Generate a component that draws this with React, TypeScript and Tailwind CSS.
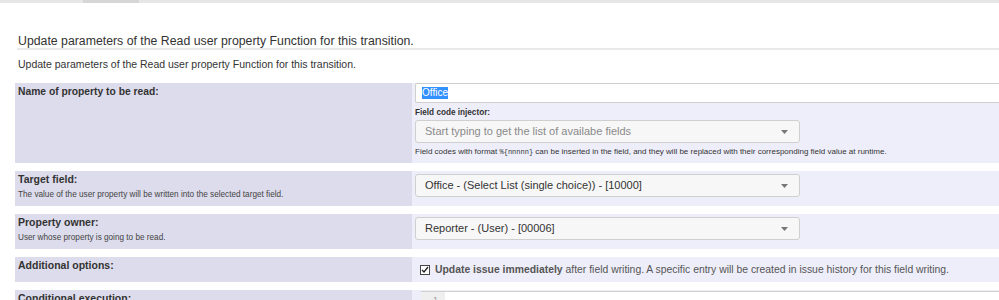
import React from "react";

const font = { fontFamily: '"Liberation Sans", Arial, sans-serif' };

function Caret() {
  return (
    <svg width="7" height="4" viewBox="0 0 7 4" className="shrink-0">
      <path d="M0 0h7L3.5 4z" fill="#777" />
    </svg>
  );
}

function Select({ text, placeholder }: { text: string; placeholder?: boolean }) {
  return (
    <div className="flex h-[23px] w-[385px] items-center justify-between rounded-[3px] border border-[#cfcfcf] bg-[#f7f7f7] pl-[9px] pr-[11px]">
      <span className={`text-[11px] ${placeholder ? "text-[#8a8a8a]" : "text-[#333]"}`}>{text}</span>
      <Caret />
    </div>
  );
}

function Row({
  label,
  help,
  labelSize = "text-[10.5px]",
  className = "",
  children,
}: {
  label: string;
  help?: string;
  labelSize?: string;
  className?: string;
  children?: React.ReactNode;
}) {
  return (
    <div className={`flex ${className}`}>
      <div className="w-[397px] shrink-0 bg-[#dddcec] pl-[3px] pt-[2px]">
        <div className={`${labelSize} font-bold leading-[13px] text-[#333]`}>{label}</div>
        {help ? <div className="mt-[4px] text-[8.2px] leading-[10px] text-[#444]">{help}</div> : null}
      </div>
      <div className="flex-1 bg-[#eeeefa] pl-[3px]">{children}</div>
    </div>
  );
}

export default function App() {
  return (
    <div className="h-[300px] w-[999px] overflow-hidden bg-white" style={font}>
      <div className="flex h-[3px] bg-[#e6e6e6]">
        <div className="ml-[83px] w-[56px] bg-[#d6d6d6]" />
      </div>

      <div className="pl-[18px] pt-[31px]">
        <h2 className="text-[12.3px] leading-[14px] text-[#333]">
          Update parameters of the Read user property Function for this transition.
        </h2>
      </div>
      <div className="ml-[17px] h-[2px] bg-[#e9e9e9]" />
      <p className="pl-[18px] pt-[8px] text-[10.5px] leading-[12px] text-[#333]">
        Update parameters of the Read user property Function for this transition.
      </p>

      <div className="ml-[15px] mt-[13px] flex flex-col gap-[8px]">
        <Row label="Name of property to be read:" labelSize="text-[10.3px]" className="h-[80px]">
          <div className="flex h-[20px] items-center rounded-l-[2px] border border-r-0 border-[#cfcfcf] bg-white pl-[6px]">
            <span className="bg-[#3390ff] text-[10px] leading-[12px] text-white">Office</span>
          </div>
          <div className="mt-[4px] text-[8.2px] font-bold leading-[11px] text-[#333]">Field code injector:</div>
          <div className="mt-[2px]">
            <Select text="Start typing to get the list of availabe fields" placeholder />
          </div>
          <div className="mt-[4px] text-[8px] leading-[10px] text-[#333]">
            Field codes with format <span className="font-mono text-[7px]">%&#123;nnnnn&#125;</span> can be inserted in
            the field, and they will be replaced with their corresponding field value at runtime.
          </div>
        </Row>

        <Row
          label="Target field:"
          help="The value of the user property will be written into the selected target field."
          className="h-[35px]"
        >
          <div className="pt-[3px]">
            <Select text="Office - (Select List (single choice)) - [10000]" />
          </div>
        </Row>

        <Row label="Property owner:" help="User whose property is going to be read." className="h-[35px]">
          <div className="pt-[3px]">
            <Select text="Reporter - (User) - [00006]" />
          </div>
        </Row>

        <Row label="Additional options:" className="h-[25px]">
          <div className="flex items-center gap-[5px] pl-[5px] pt-[5px]">
            <svg width="10" height="10" viewBox="0 0 10 10" className="shrink-0">
              <rect x="0.5" y="0.5" width="9" height="9" fill="white" stroke="#444" />
              <path d="M2 5l2 2 4-5" fill="none" stroke="#222" strokeWidth="1.3" />
            </svg>
            <span className="text-[10.4px] text-[#555]">
              <b>Update issue immediately</b> after field writing. A specific entry will be created in issue history for
              this field writing.
            </span>
          </div>
        </Row>

        <Row label="Conditional execution:" className="h-[30px]">
          <div className="ml-[6px] mt-[1px] flex h-full border-t border-[#d0d0d0] bg-white">
            <div className="w-[24px] bg-[#efefef] pl-[12px] pt-[2px] text-[9px] text-[#999]">1</div>
          </div>
        </Row>
      </div>
    </div>
  );
}
